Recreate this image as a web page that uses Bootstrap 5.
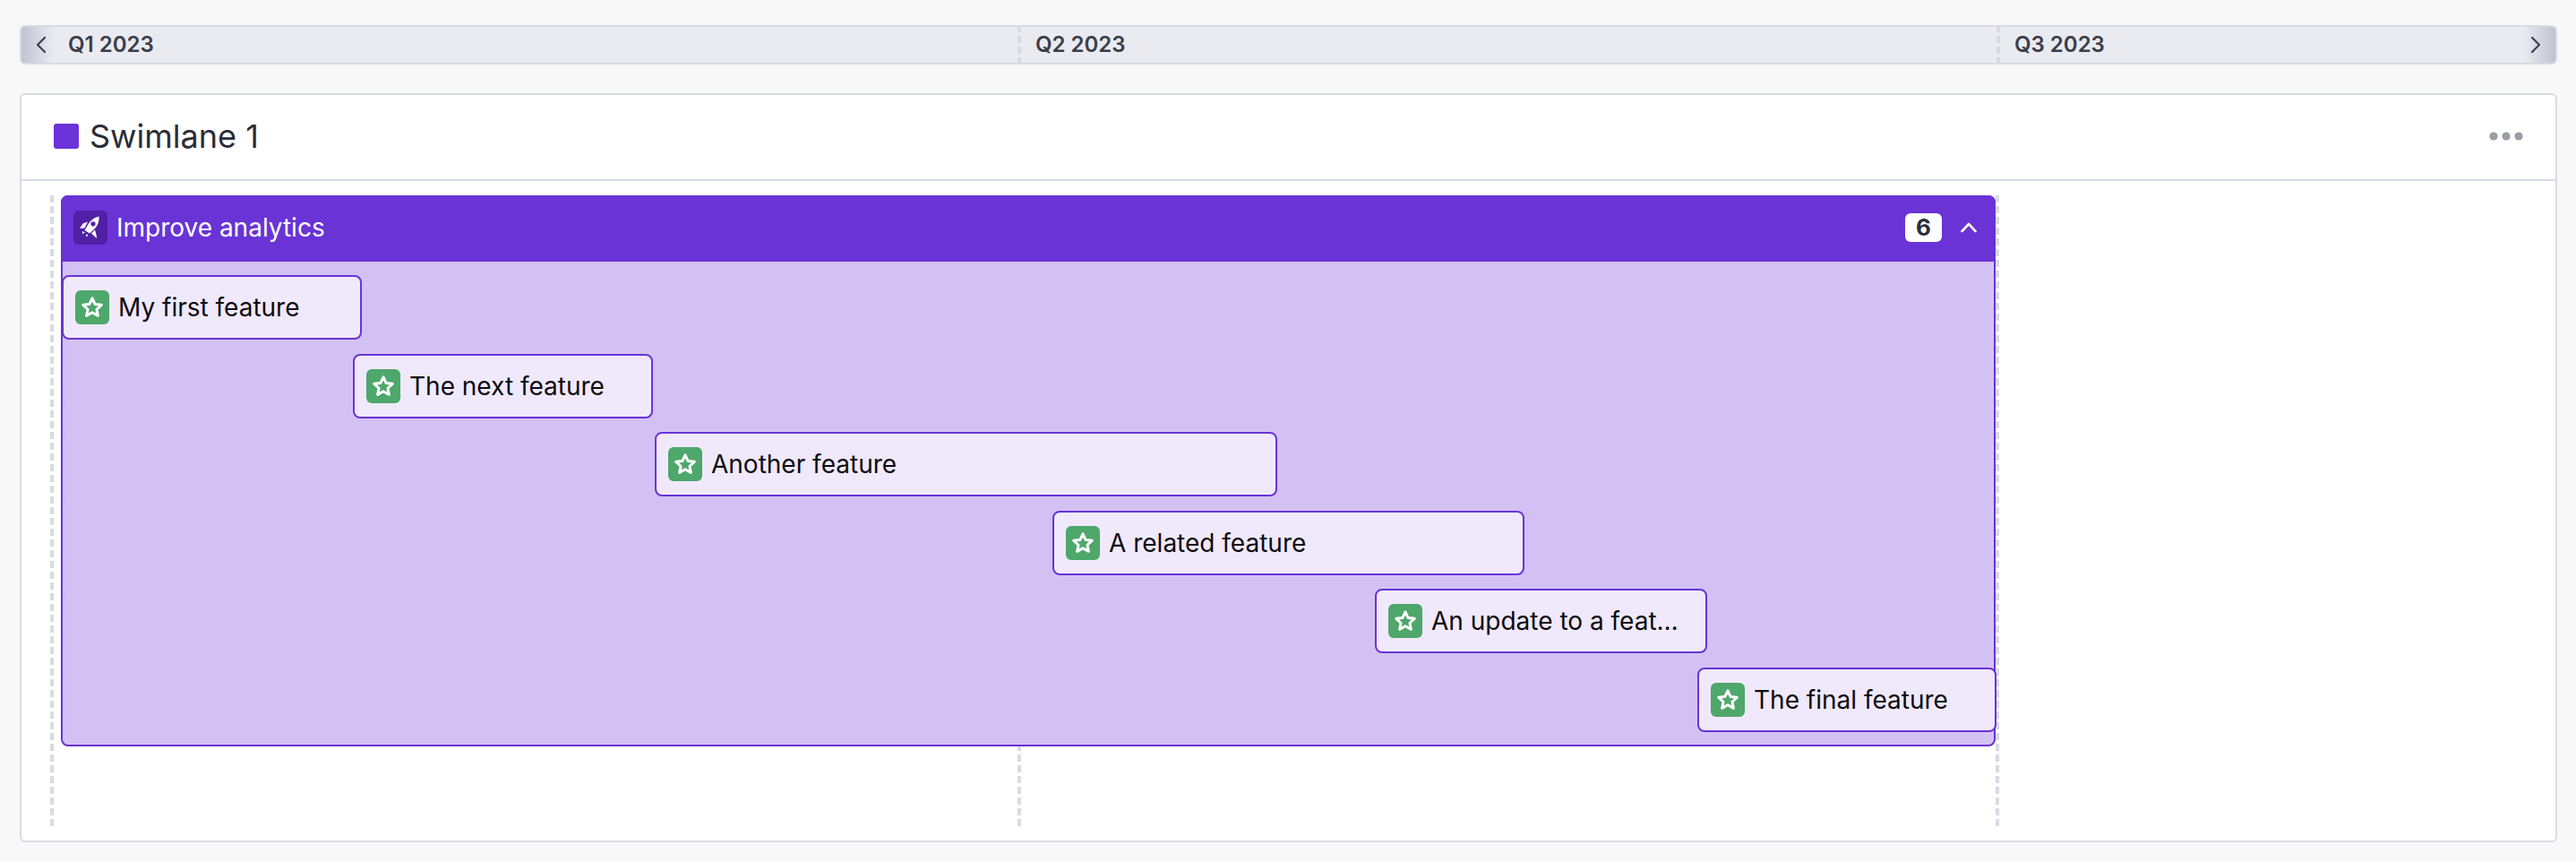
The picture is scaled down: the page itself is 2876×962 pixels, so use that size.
<!doctype html>
<html lang="en">
<head>
<meta charset="utf-8">
<title>Swimlane</title>
<link href="https://cdn.jsdelivr.net/npm/bootstrap@5.3.0/dist/css/bootstrap.min.css" rel="stylesheet">
<style>
html,body{height:100%;}
body{background:#f8f8f9;font-family:Inter,"Liberation Sans",sans-serif;overflow:hidden;color:#2b2d38;}
.page-wrap{padding:28px 21px 0 22px;}
.time-bar{height:44px;border:2px solid #d8dbe3;border-radius:6px;background:#e9ebf0;position:relative;overflow:hidden;}
.quarter{font-size:24px;font-weight:600;color:#3b3e4a;line-height:40px;white-space:nowrap;padding-left:18px;position:relative;}
.q-one{width:1114px;padding-left:52px;}
.q-two{width:1093px;}
.quarter-dash{position:absolute;left:-2px;top:-2px;bottom:-2px;width:4px;background:repeating-linear-gradient(to bottom,#d8dbe3 0 8px,transparent 8px 12px);}
.edge-btn{position:absolute;top:0;bottom:0;width:36px;display:flex;align-items:center;justify-content:center;}
.edge-left{left:0;padding-left:8px;background:linear-gradient(to right,#bfc3d1,rgba(233,235,240,0));}
.edge-right{right:0;padding-right:8px;background:linear-gradient(to left,#bfc3d1,rgba(233,235,240,0));}
.lane-card{margin-top:32px;height:836px;border:2px solid #d8dbe3;border-radius:6px;background:#fff;}
.lane-head{height:96px;flex:none;border-bottom:2px solid #d8dbe3;padding:0 36px 2px 36px;}
.lane-swatch{width:28px;height:28px;border-radius:3px;background:#6b33d9;}
.lane-title{font-size:36px;font-weight:400;color:#2b2d38;margin:0 0 0 12px;line-height:44px;}
.lane-body{position:relative;flex:1;padding:16px 0 0 44px;}
.grid-dash{position:absolute;top:16px;height:704px;width:4px;background:repeating-linear-gradient(to bottom,#d8dbe3 0 8px,transparent 8px 12px);}
.dash-a{left:32px;}
.dash-b{left:1112px;}
.dash-c{left:2204px;}
.epic{position:relative;width:2160px;height:615px;border:2px solid #6933d6;border-radius:8px;background:#d3c1f4;}
.epic-head{height:74px;margin:-2px -2px 0;background:#6933d6;border-radius:8px 8px 0 0;padding:0 21px 2px 14px;color:#fff;}
.epic-icon{width:38px;height:38px;border-radius:6px;background:#5020a6;}
.epic-title{font-size:28px;margin-left:10px;line-height:34px;}
.epic-count{background:#fff;color:#2b2d38;font-size:26px;font-weight:700;border-radius:6px;width:41px;height:32px;line-height:32px;text-align:center;}
.epic-toggle{margin-left:21px;}
.epic-rows{display:flex;flex-direction:column;gap:15.5px;padding-top:15px;}
.feat{height:72px;border:2px solid #6933d6;border-radius:8px;background:#f0e9fb;padding:0 28px 0 13px;display:flex;align-items:center;color:#0b0b10;box-sizing:border-box;}
.feat-icon{flex:none;width:38px;height:38px;border-radius:6px;background:#4ea76b;}
.feat-name{font-size:28px;line-height:36px;margin-left:10px;min-width:0;white-space:nowrap;}
</style>
</head>
<body>
<div class="page-wrap">
  <div class="time-bar d-flex">
    <div class="quarter q-one">Q1 2023</div>
    <div class="quarter q-two"><span class="quarter-dash"></span>Q2 2023</div>
    <div class="quarter flex-grow-1"><span class="quarter-dash"></span>Q3 2023</div>
    <div class="edge-btn edge-left"><svg width="12" height="20" viewBox="0 0 12 20" fill="none" stroke="#3b3e4a" stroke-width="2.2" stroke-linecap="round" stroke-linejoin="round"><path d="M10 2 2 10l8 8"/></svg></div>
    <div class="edge-btn edge-right"><svg width="12" height="20" viewBox="0 0 12 20" fill="none" stroke="#3b3e4a" stroke-width="2.2" stroke-linecap="round" stroke-linejoin="round"><path d="M2 2 10 10l-8 8"/></svg></div>
  </div>

  <div class="card lane-card">
    <div class="lane-head d-flex align-items-center">
      <span class="lane-swatch"></span>
      <h2 class="lane-title">Swimlane 1</h2>
      <svg class="ms-auto" width="38" height="10" viewBox="0 0 38 10" fill="#9a9ca6"><circle cx="5" cy="5" r="4.6"/><circle cx="19" cy="5" r="4.6"/><circle cx="33" cy="5" r="4.6"/></svg>
    </div>
    <div class="lane-body">
      <span class="grid-dash dash-a"></span>
      <span class="grid-dash dash-b"></span>
      <span class="grid-dash dash-c"></span>
      <div class="epic">
        <div class="epic-head d-flex align-items-center">
          <span class="epic-icon d-flex align-items-center justify-content-center">
            <svg width="28" height="28" viewBox="0 0 28 28" fill="#fff"><path fill-rule="evenodd" d="M23.5 1.500C17 3 13 7 10.500 12l-3 5 5.500 3.500 5-4.500c4-4 6-9 5.500-14.500zM17 7.200a2.600 2.600 0 1 1 0 5.200 2.600 2.600 0 0 1 0-5.200z"/><path d="M11 7.500 5.500 9.500 2 15l5.500-.5zM19 16.500l1.500 5.500.5 4-6-5.500zM5 18l3 1.500-3 1.500zM9 21l2.500 1.500-2 2z"/></svg>
          </span>
          <span class="epic-title">Improve analytics</span>
          <span class="epic-count ms-auto">6</span>
          <svg class="epic-toggle" width="18" height="12" viewBox="0 0 18 12" fill="none" stroke="#fff" stroke-width="2.6" stroke-linecap="round" stroke-linejoin="round"><path d="M1.500 10 9 2l7.500 8"/></svg>
        </div>
        <div class="epic-rows">
          <div class="feat" style="margin-left:-1px;width:335px"><span class="feat-icon d-flex align-items-center justify-content-center"><svg width="26" height="26" viewBox="0 0 28 28" fill="none" stroke="#fff" stroke-width="3.2" stroke-linejoin="round"><path d="m14 3 3.300 7.200 7.800.9-5.800 5.300 1.600 7.700-6.900-3.900-6.900 3.900 1.600-7.700-5.800-5.300 7.800-.9z"/></svg></span><span class="feat-name">My first feature</span></div>
          <div class="feat" style="margin-left:324px;width:335px"><span class="feat-icon d-flex align-items-center justify-content-center"><svg width="26" height="26" viewBox="0 0 28 28" fill="none" stroke="#fff" stroke-width="3.2" stroke-linejoin="round"><path d="m14 3 3.300 7.200 7.800.9-5.800 5.300 1.600 7.700-6.900-3.900-6.900 3.900 1.600-7.700-5.800-5.300 7.800-.9z"/></svg></span><span class="feat-name">The next feature</span></div>
          <div class="feat" style="margin-left:661px;width:695px"><span class="feat-icon d-flex align-items-center justify-content-center"><svg width="26" height="26" viewBox="0 0 28 28" fill="none" stroke="#fff" stroke-width="3.2" stroke-linejoin="round"><path d="m14 3 3.300 7.200 7.800.9-5.800 5.300 1.600 7.700-6.900-3.900-6.900 3.900 1.600-7.700-5.800-5.300 7.800-.9z"/></svg></span><span class="feat-name">Another feature</span></div>
          <div class="feat" style="margin-left:1105px;width:527px"><span class="feat-icon d-flex align-items-center justify-content-center"><svg width="26" height="26" viewBox="0 0 28 28" fill="none" stroke="#fff" stroke-width="3.2" stroke-linejoin="round"><path d="m14 3 3.300 7.200 7.800.9-5.800 5.300 1.600 7.700-6.900-3.900-6.900 3.900 1.600-7.700-5.800-5.300 7.800-.9z"/></svg></span><span class="feat-name">A related feature</span></div>
          <div class="feat" style="margin-left:1465px;width:371px"><span class="feat-icon d-flex align-items-center justify-content-center"><svg width="26" height="26" viewBox="0 0 28 28" fill="none" stroke="#fff" stroke-width="3.2" stroke-linejoin="round"><path d="m14 3 3.300 7.200 7.800.9-5.800 5.300 1.600 7.700-6.900-3.900-6.900 3.900 1.600-7.700-5.800-5.300 7.800-.9z"/></svg></span><span class="feat-name">An update to a feat…</span></div>
          <div class="feat" style="margin-left:1825px;width:334px"><span class="feat-icon d-flex align-items-center justify-content-center"><svg width="26" height="26" viewBox="0 0 28 28" fill="none" stroke="#fff" stroke-width="3.2" stroke-linejoin="round"><path d="m14 3 3.300 7.200 7.800.9-5.800 5.300 1.600 7.700-6.900-3.900-6.900 3.900 1.600-7.700-5.800-5.300 7.800-.9z"/></svg></span><span class="feat-name">The final feature</span></div>
        </div>
      </div>
    </div>
  </div>
</div>
<script src="https://cdn.jsdelivr.net/npm/bootstrap@5.3.0/dist/js/bootstrap.bundle.min.js"></script>
</body>
</html>
